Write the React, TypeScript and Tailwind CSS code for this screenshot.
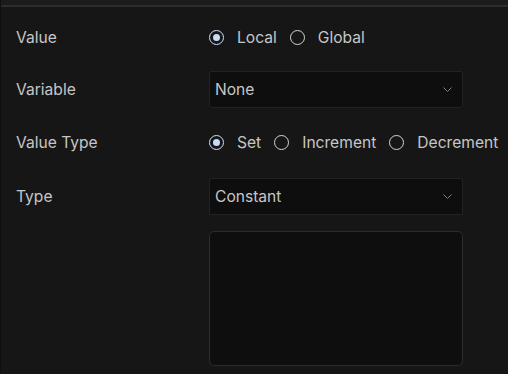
function Radio({ label, checked }: { label: string; checked?: boolean }) {
  return (
    <div className="flex items-center gap-[13px]">
      <span
        className={
          checked
            ? "flex h-[15px] w-[15px] items-center justify-center rounded-full border-[1.5px] border-[#cfe0f7]"
            : "flex h-[15px] w-[15px] items-center justify-center rounded-full border-[1.5px] border-[#d4d4d4]"
        }
      >
        {checked && <span className="h-[7px] w-[7px] rounded-full bg-[#c7dcfb]" />}
      </span>
      <span>{label}</span>
    </div>
  );
}

function Select({ value }: { value: string }) {
  return (
    <div className="flex h-[37px] w-[254px] items-center justify-between rounded-[2px] border border-[#222222] bg-[#0e0e0e] pl-[5px] pr-[10px]">
      <span>{value}</span>
      <svg width="9" height="5" viewBox="0 0 9 5" fill="none">
        <path d="M0.5 0.5L4.5 4.5L8.5 0.5" stroke="#7e7e7e" strokeWidth="1" />
      </svg>
    </div>
  );
}

export default function App() {
  return (
    <div
      className="h-[374px] w-[508px] overflow-hidden border-l border-[#0f0f0f] bg-[#161616] text-[15.6px] text-[#c6c6c6]"
      style={{ fontFamily: "Inter, 'Noto Sans', sans-serif" }}
    >
      <div className="h-[5px] bg-[#1c1c1c]" />
      <div className="h-[2px] bg-[#2d2d2d]" />

      <div className="pl-[15px] pt-[13px]">
        <div className="grid grid-cols-[193px_1fr] items-center">
          <div className="flex h-[36px] items-center">Value</div>
          <div className="flex items-center gap-[13px]">
            <Radio label="Local" checked />
            <Radio label="Global" />
          </div>

          <div className="mt-[15px] flex h-[37px] items-center">Variable</div>
          <div className="mt-[15px]">
            <Select value="None" />
          </div>

          <div className="mt-[17px] flex h-[36px] items-center">Value Type</div>
          <div className="mt-[17px] flex items-center gap-[13px]">
            <Radio label="Set" checked />
            <Radio label="Increment" />
            <Radio label="Decrement" />
          </div>

          <div className="mt-[17px] flex h-[36px] items-center">Type</div>
          <div className="mt-[17px]">
            <Select value="Constant" />
          </div>

          <div />
          <div className="mt-[16px] h-[135px] w-[254px] rounded-[5px] border border-[#2c2c2c] bg-[#0e0e0e]" />
        </div>
      </div>
    </div>
  );
}
